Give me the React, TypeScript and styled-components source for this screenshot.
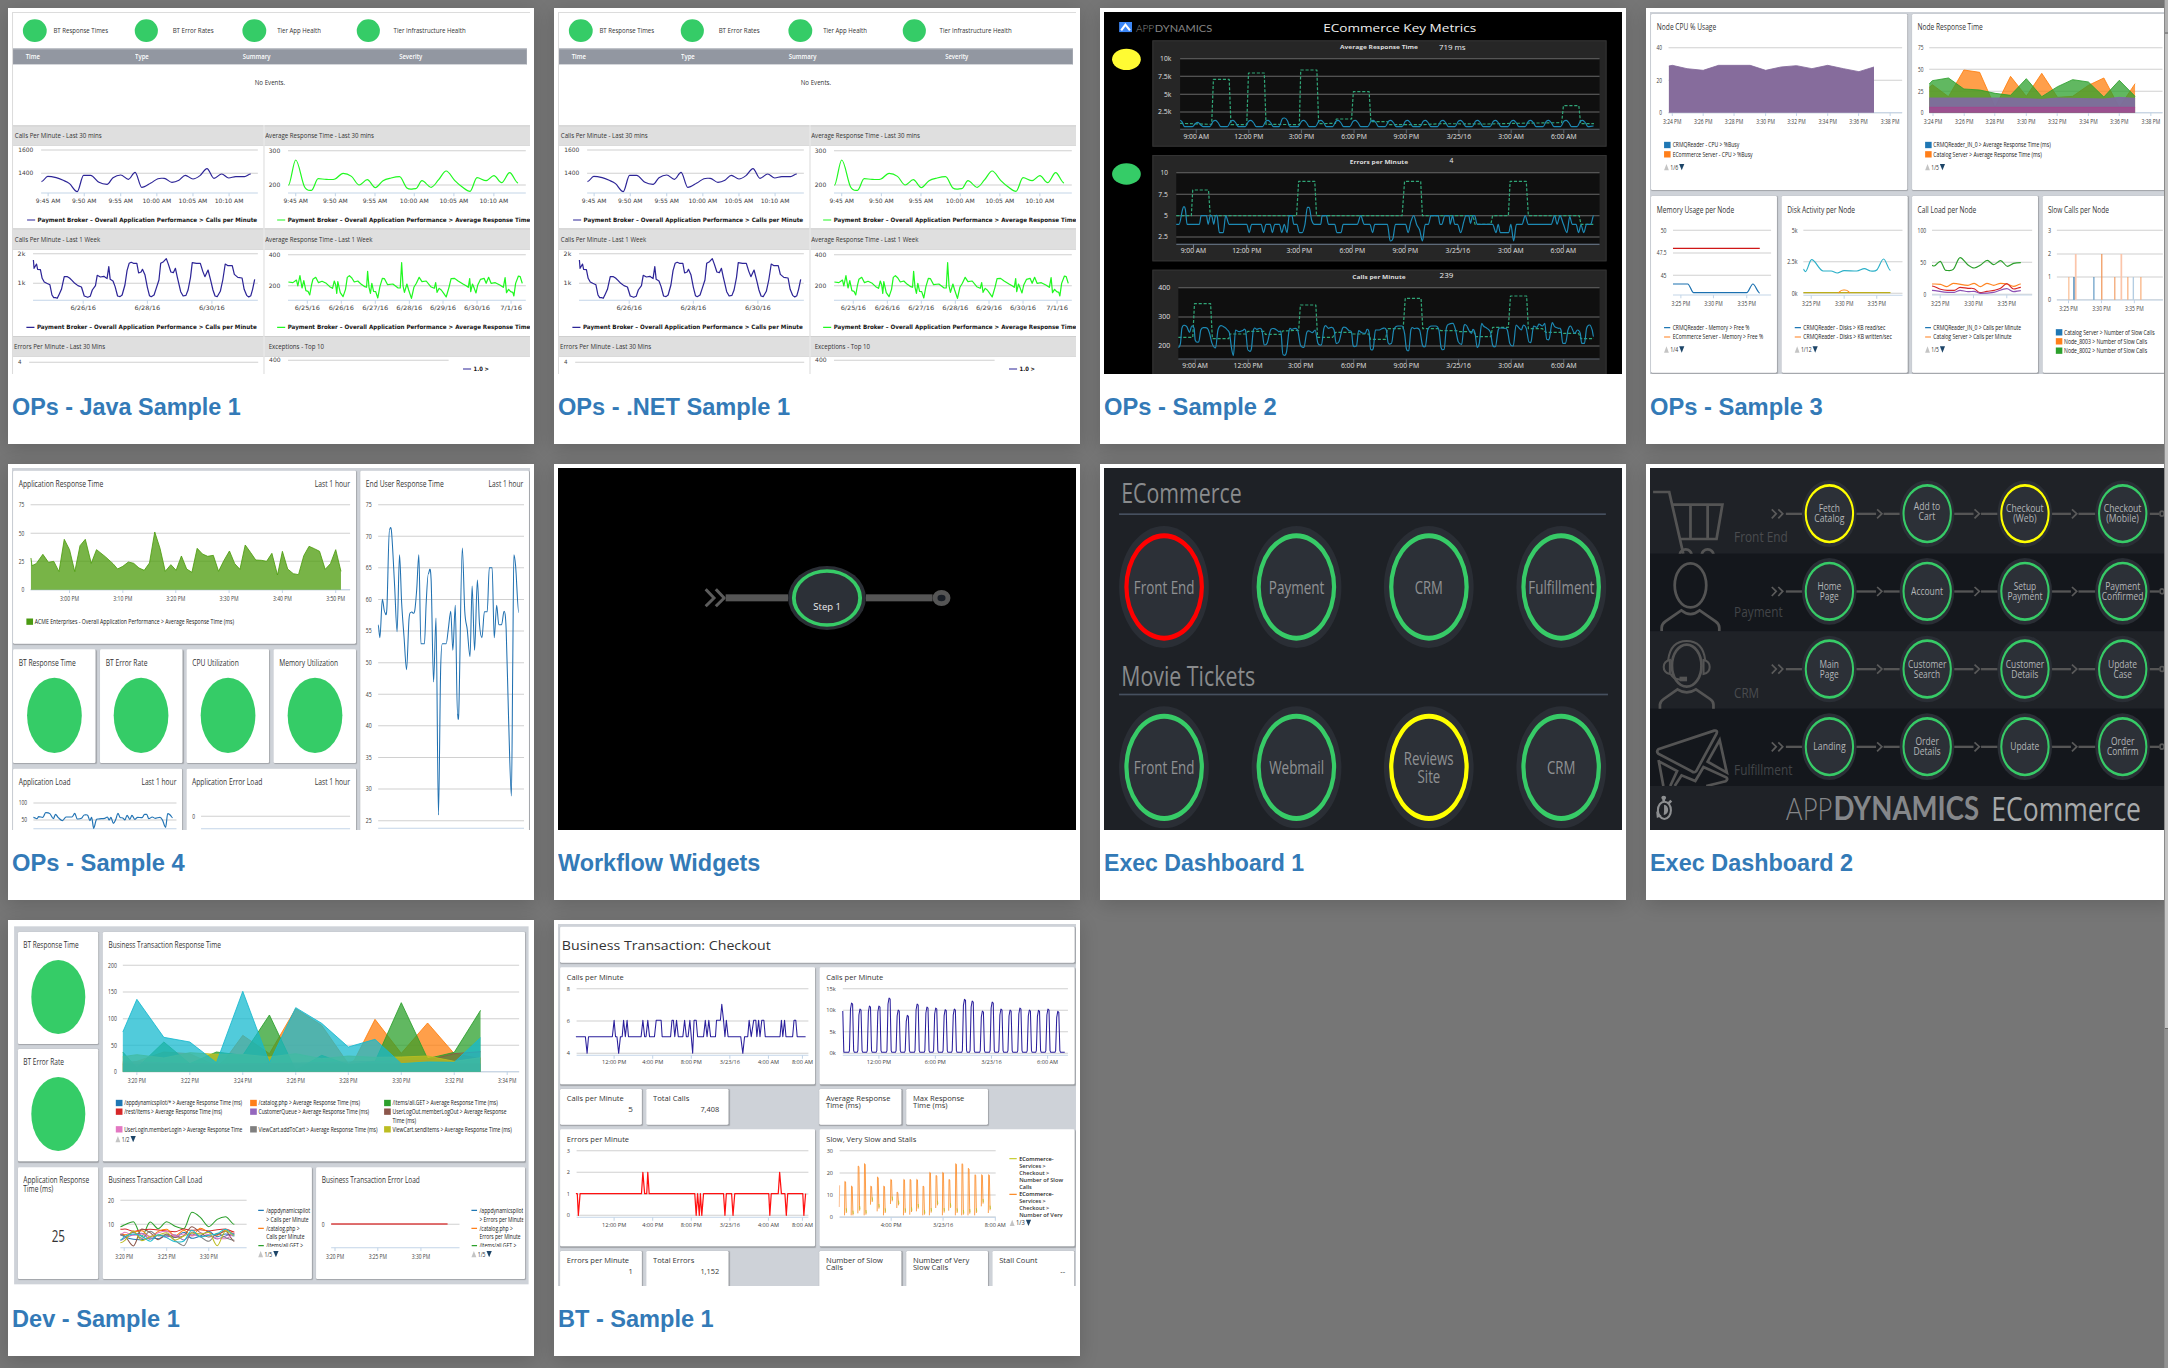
import React, { ReactNode, useLayoutEffect, useRef, useState } from "react";
import styled, { createGlobalStyle } from "styled-components";

const Global = createGlobalStyle`
  * { box-sizing: border-box; }
  body { margin: 0; background: #767676; font-family: "Liberation Sans", Arial, sans-serif; overflow: hidden; }
`;

/* ---------- page shell ---------- */
const Page = styled.div`
  display: flex;
  width: 2168px;
  height: 1368px;
  background: #767676;
  overflow: hidden;
`;
const Viewport = styled.main`
  width: 2164px;
  height: 1368px;
  overflow: hidden;
`;
const Gallery = styled.div`
  display: grid;
  grid-template-columns: repeat(4, 526px);
  grid-auto-rows: 436px;
  gap: 20px;
  padding: 8px;
  width: 2180px;
`;
const Card = styled.article`
  background: #fff;
  padding: 4px;
  box-shadow: 0 4px 18px rgba(0, 0, 0, 0.16);
`;
const Thumb = styled.div`
  width: 518px;
  height: 362px;
  overflow: hidden;
`;
const Caption = styled.h3`
  margin: 18px 0 0;
  height: 30px;
  font-size: 24px;
  line-height: 30px;
  font-weight: 700;
  color: #337ab7;
`;
const Rail = styled.aside`
  width: 4px;
  height: 1368px;
  border-left: 1px solid #8a8a8a;
  display: flex;
  flex-direction: column;
`;
const RailPart = styled.div<{ $h: number; $c: string }>`
  height: ${(p) => p.$h}px;
  background: ${(p) => p.$c};
`;

/* ---------- dashboard primitives ---------- */
const Board = styled.div<{ $w?: number; $bg?: string }>`
  width: ${(p) => p.$w ?? 1477}px;
  height: 1086px;
  overflow: hidden;
  background: ${(p) => p.$bg ?? "#ced2d8"};
  transform-origin: 0 0;
  transform: scale(${(p) => 518 / (p.$w ?? 1477)}, 0.33333);
  font-family: "Open Sans", "Noto Sans", sans-serif;
`;
const Grid = styled.div<{ $cols: string; $rows?: string; $gap?: string; $pad?: string }>`
  display: grid;
  grid-template-columns: ${(p) => p.$cols};
  grid-template-rows: ${(p) => p.$rows ?? "auto"};
  gap: ${(p) => p.$gap ?? "0"};
  padding: ${(p) => p.$pad ?? "0"};
`;
const Stack = styled.div<{ $gap?: number; $pad?: string }>`
  display: flex;
  flex-direction: column;
  gap: ${(p) => p.$gap ?? 0}px;
  padding: ${(p) => p.$pad ?? "0"};
`;
const Row = styled.div<{ $h: number; $pad?: string; $gap?: number; $bg?: string; $between?: boolean; $center?: boolean }>`
  display: flex;
  align-items: center;
  flex: none;
  height: ${(p) => p.$h}px;
  padding: ${(p) => p.$pad ?? "0"};
  gap: ${(p) => p.$gap ?? 0}px;
  background: ${(p) => p.$bg ?? "transparent"};
  justify-content: ${(p) => (p.$center ? "center" : p.$between ? "space-between" : "flex-start")};
`;
const Panel = styled.section<{ $h?: number }>`
  background: #fff;
  border-radius: 4px;
  overflow: hidden;
  height: ${(p) => (p.$h ? p.$h + "px" : "auto")};
  box-shadow: 2px 3px 3px rgba(0, 0, 0, 0.22);
`;
const Disc = styled.div<{ $w: number; $h: number; $c?: string }>`
  flex: none;
  width: ${(p) => p.$w}px;
  height: ${(p) => p.$h}px;
  border-radius: 50%;
  background: ${(p) => p.$c ?? "#35cc67"};
`;

const FitBox = styled.span<{ $w: number; $s: number; $c: string; $b: number; $l?: number; $f?: string }>`
  display: block;
  flex: none;
  width: ${(p) => p.$w}px;
  font-size: ${(p) => p.$s}px;
  line-height: ${(p) => p.$l ?? p.$s * 1.3}px;
  font-weight: ${(p) => p.$b};
  color: ${(p) => p.$c};
  ${(p) => (p.$f ? `font-family: ${p.$f};` : "")}
`;
const FitInner = styled.span`
  display: inline-block;
  white-space: nowrap;
  transform-origin: 0 50%;
`;
type FitProps = { w: number; s: number; c?: string; b?: number; l?: number; f?: string; children: ReactNode };
/* Text squeezed or stretched to an exact run length. */
function Fit({ w, s, c = "#333", b = 400, l, f, children }: FitProps) {
  const ref = useRef<HTMLSpanElement>(null);
  const [k, setK] = useState(1);
  useLayoutEffect(() => {
    if (ref.current) setK(w / ref.current.offsetWidth);
  }, [w, s]);
  return (
    <FitBox $w={w} $s={s} $c={c} $b={b} $l={l} $f={f}>
      <FitInner ref={ref} style={{ transform: `scaleX(${k})` }}>{children}</FitInner>
    </FitBox>
  );
}

/* ---------- chart primitives ---------- */
const Svg = styled.svg`
  display: block;
  flex: none;
`;
type View = [number, number, number, number];
const Chart = ({ v, children, font }: { v: View; children: ReactNode; font?: string }) => (
  <Svg width={v[2] - v[0]} height={v[3] - v[1]} viewBox={`${v[0]} ${v[1]} ${v[2] - v[0]} ${v[3] - v[1]}`} fontFamily={font ?? '"Open Sans", sans-serif'}>
    {children}
  </Svg>
);
type TProps = { x: number; y: number; w: number; s?: number; c?: string; a?: "start" | "middle" | "end"; b?: number; children: string };
/* y is the vertical centre of the capitals */
const T = ({ x, y, w, s = 20, c = "#333", a = "start", b = 400, children }: TProps) => (
  <text x={x} y={y + s * 0.36} fontSize={s} fill={c} textAnchor={a} fontWeight={b} textLength={w} lengthAdjust="spacingAndGlyphs">
    {children}
  </text>
);
const parse = (d: string) => d.trim().split(/\s+/).map((p) => p.split(",").map(Number));
const smooth = (d: string) => {
  const p = parse(d);
  let out = `M${p[0][0]},${p[0][1]}`;
  for (let i = 0; i < p.length - 1; i++) {
    const a = p[i - 1] ?? p[i], b = p[i], c = p[i + 1], e = p[i + 2] ?? c;
    const flatB = (b[1] - a[1]) * (c[1] - b[1]) <= 0;
    const flatC = (c[1] - b[1]) * (e[1] - c[1]) <= 0;
    const h = (c[0] - b[0]) / 3;
    const mb = flatB ? 0 : (c[1] - a[1]) / (c[0] - a[0]);
    const mc = flatC ? 0 : (e[1] - b[1]) / (e[0] - b[0]);
    out += `C${b[0] + h},${b[1] + mb * h} ${c[0] - h},${c[1] - mc * h} ${c[0]},${c[1]}`;
  }
  return out;
};
const Curve = ({ d, c, w = 3.4 }: { d: string; c: string; w?: number }) => <path d={smooth(d)} fill="none" stroke={c} strokeWidth={w} />;
const Line = ({ d, c, w = 3.5, dash }: { d: string; c: string; w?: number; dash?: string }) => (
  <polyline points={d} fill="none" stroke={c} strokeWidth={w} strokeDasharray={dash} strokeLinejoin="round" />
);
const Area = ({ d, c, base, o = 0.75 }: { d: string; c: string; base: number; o?: number }) => {
  const p = parse(d);
  return (
    <g>
      <polygon points={`${d} ${p[p.length - 1][0]},${base} ${p[0][0]},${base}`} fill={c} fillOpacity={o} />
      <polyline points={d} fill="none" stroke={c} strokeWidth={2.5} />
    </g>
  );
};
type Tick = [number, string, number];
type AxisProps = {
  x1: number; x2: number; ys: [number, string, number][]; lx: number; base?: number; xs?: Tick[]; ly?: number;
  s?: number; c?: string; grid?: string; baseC?: string; gw?: number; tick?: number;
};
const Axis = ({ x1, x2, ys, lx, base, xs = [], ly = 0, s = 20, c = "#404040", grid = "#d0d0d0", baseC = "#c3d5e8", gw = 3, tick = 10 }: AxisProps) => (
  <g>
    {ys.map(([y, t, w]) => (
      <g key={y}>
        <line x1={x1} x2={x2} y1={y} y2={y} stroke={grid} strokeWidth={gw} />
        <T x={lx} y={y} w={w} s={s} c={c} a="end">{t}</T>
      </g>
    ))}
    {base && <line x1={x1} x2={x2} y1={base} y2={base} stroke={baseC} strokeWidth={3} />}
    {xs.map(([x, t, w]) => (
      <g key={x}>
        {base && <line x1={x} x2={x} y1={base} y2={base + tick} stroke={baseC} strokeWidth={3} />}
        <T x={x} y={ly} w={w} s={s} c={c} a="middle">{t}</T>
      </g>
    ))}
  </g>
);
const Key = ({ x, y, c, w, children, line, gap = 24, s = 20, b = 400 }: { x: number; y: number; c: string; w: number; children: string; line?: boolean; gap?: number; s?: number; b?: number }) => (
  <g>
    {line ? <line x1={x} x2={x + gap - 7} y1={y} y2={y} stroke={c} strokeWidth={3.4} /> : <rect x={x} y={y - 9.5} width={19} height={19} fill={c} />}
    <T x={x + gap} y={y} w={w} s={s} b={b} c="#151515">{children}</T>
  </g>
);
const Pager = ({ x, y, w, children }: { x: number; y: number; w: number; children: string }) => (
  <g>
    <path d={`M${x},${y + 9}h14l-7,-19z`} fill="#c4c4c4" />
    <T x={x + 18} y={y} w={w} s={20}>{children}</T>
    <path d={`M${x + 21 + w},${y - 10}h15l-7.5,19z`} fill="#1d4568" />
  </g>
);

/* ---------- OPs - Java / .NET ---------- */
const Framed = styled.div`
  height: 1086px;
  border-left: 3px solid #dcdcdc;
  border-top: 3px solid #dcdcdc;
`;
const Health = styled.div<{ $gap: number }>`
  display: flex;
  align-items: center;
  gap: ${(p) => p.$gap}px;
`;
const EventHead = styled.div`
  display: grid;
  grid-template-columns: 312px 307px 446px auto;
  align-items: center;
  width: 1465px;
  height: 50px;
  padding-left: 36px;
  background: #9297a1;
  border-top: 3px solid #c3c6cc;
  border-bottom: 3px solid #d4d6da;
`;
const Cell = styled.div<{ $right?: boolean }>`
  border-left: ${(p) => (p.$right ? "3px solid #dcdcdc" : "none")};
`;
const CellHead = styled.div<{ $h: number; $pad: number }>`
  display: flex;
  align-items: center;
  height: ${(p) => p.$h}px;
  padding-left: ${(p) => p.$pad}px;
  background: #dfdfdf;
  border-top: 3px solid #cfcfcf;
  border-bottom: 2px solid #d2d2d2;
`;
const verdana = '"DejaVu Sans", sans-serif';
const navy = "#2d2597";
const lime = "#20f820";

const EventsBoard = () => (
  <Board $bg="#fff">
    <Framed>
      <Grid $cols="319px 307px 326px auto" $rows="106px" $pad="0 0 0 28px">
        <Health $gap={19}><Disc $w={68} $h={68} /><Fit w={156} s={21}>BT Response Times</Fit></Health>
        <Health $gap={42}><Disc $w={66} $h={68} /><Fit w={117} s={21}>BT Error Rates</Fit></Health>
        <Health $gap={31}><Disc $w={68} $h={68} /><Fit w={125} s={21}>Tier App Health</Fit></Health>
        <Health $gap={39}><Disc $w={66} $h={68} /><Fit w={206} s={21}>Tier Infrastructure Health</Fit></Health>
      </Grid>
      <EventHead>
        <Fit w={40} s={20} c="#fff" b={600}>Time</Fit>
        <Fit w={39} s={20} c="#fff" b={600}>Type</Fit>
        <Fit w={79} s={20} c="#fff" b={600}>Summary</Fit>
        <Fit w={66} s={20} c="#fff" b={600}>Severity</Fit>
      </EventHead>
      <Row $h={181} $pad="0 0 74px 689px"><Fit w={87} s={21}>No Events.</Fit></Row>
      <Grid $cols="714px 763px">
        <Cell>
          <CellHead $h={61} $pad={5}><Fit w={248} s={21}>Calls Per Minute - Last 30 mins</Fit></CellHead>
          <Chart v={[37, 437, 751, 685]} font={verdana}>
            <Axis x1={117} x2={735} lx={95} s={18} ys={[[450, "1600", 43], [520, "1400", 43]]} base={579} ly={603}
              xs={[[137, "9:45 AM", 70], [240, "9:50 AM", 70], [344, "9:55 AM", 70], [447, "10:00 AM", 82], [550, "10:05 AM", 82], [653, "10:10 AM", 82]]} />
            <Curve c={navy} d="118,545 136,529 160,533 180,541 198,551 220,575 238,526 258,526 282,547 305,553 322,533 344,525 366,538 385,517 404,562 430,549 450,536 468,535 490,547 510,541 528,526 550,537 570,527 590,506 610,535 632,522 652,534 672,530 697,530 715,522" />
            <Key x={77} y={660} c={navy} w={626} line gap={30} s={18} b={700}>Payment Broker – Overall Application Performance &gt; Calls per Minute</Key>
          </Chart>
        </Cell>
        <Cell $right>
          <CellHead $h={61} $pad={2}><Fit w={310} s={21}>Average Response Time - Last 30 mins</Fit></CellHead>
          <Chart v={[754, 437, 1511, 685]} font={verdana}>
            <Axis x1={821} x2={1499} lx={799} s={18} ys={[[452, "300", 33], [555, "200", 33]]} base={579} ly={603}
              xs={[[843, "9:45 AM", 70], [956, "9:50 AM", 70], [1069, "9:55 AM", 70], [1181, "10:00 AM", 82], [1294, "10:05 AM", 82], [1408, "10:10 AM", 82]]} />
            <Curve c={lime} d="822,556 843,480 868,560 888,571 907,536 930,538 955,537 978,520 1002,529 1024,555 1047,539 1070,563 1092,542 1115,534 1139,530 1160,564 1185,566 1203,542 1229,562 1250,540 1272,513 1296,541 1318,561 1340,574 1360,533 1386,542 1408,527 1430,548 1453,518 1477,549" />
            <Key x={790} y={660} c={lime} w={692} line gap={30} s={18} b={700}>Payment Broker – Overall Application Performance &gt; Average Response Time</Key>
          </Chart>
        </Cell>
        <Cell>
          <CellHead $h={64} $pad={5}><Fit w={243} s={21}>Calls Per Minute - Last 1 Week</Fit></CellHead>
          <Chart v={[37, 749, 751, 1008]} font={verdana}>
            <Axis x1={94} x2={735} lx={72} s={18} ys={[[761, "2k", 22], [850, "1k", 22]]} base={901} ly={925}
              xs={[[237, "6/26/16", 73], [420, "6/28/16", 73], [604, "6/30/16", 74]]} />
            <Line c={navy} d="95,780 97,805 104,792 107,808 115,809 120,835 126,846 133,850 142,854 148,885 153,893 158,893 163,895 168,884 175,868 183,830 192,830 198,834 205,841 213,850 222,857 232,861 240,888 250,892 257,889 263,870 272,857 277,826 286,831 296,829 305,836 310,800 314,838 322,843 328,860 335,888 342,890 348,885 356,855 362,812 368,790 374,787 380,790 390,790 395,819 402,816 406,808 413,824 420,862 426,887 431,890 439,885 445,866 453,840 458,790 466,785 474,776 480,793 487,816 494,818 500,805 505,830 515,875 522,888 530,886 536,870 543,832 548,788 560,790 571,790 578,814 584,830 593,810 600,839 607,870 613,888 619,890 628,874 635,840 642,792 650,797 662,797 668,823 678,832 690,834 696,868 703,886 709,891 715,887 720,868 726,838" />
            <Key x={75} y={982} c={navy} w={627} line gap={30} s={18} b={700}>Payment Broker – Overall Application Performance &gt; Calls per Minute</Key>
          </Chart>
        </Cell>
        <Cell $right>
          <CellHead $h={64} $pad={2}><Fit w={306} s={21}>Average Response Time - Last 1 Week</Fit></CellHead>
          <Chart v={[754, 749, 1511, 1008]} font={verdana}>
            <Axis x1={821} x2={1499} lx={799} s={18} ys={[[764, "400", 33], [857, "200", 33]]} base={901} ly={923}
              xs={[[876, "6/25/16", 72], [973, "6/26/16", 72], [1070, "6/27/16", 74], [1167, "6/28/16", 74], [1263, "6/29/16", 74], [1360, "6/30/16", 74], [1457, "7/1/16", 62]]} />
            <Line c={lime} d="822,846 835,848 845,840 849,858 855,827 861,864 866,842 872,872 878,874 883,885 888,855 892,838 900,832 908,848 918,844 930,850 940,860 948,865 953,843 957,855 960,880 963,845 970,878 978,890 985,868 990,832 996,827 1003,834 1010,846 1020,843 1030,853 1040,860 1045,862 1048,814 1052,862 1056,880 1060,850 1065,874 1071,875 1077,894 1083,860 1090,835 1096,836 1105,854 1120,852 1135,864 1141,864 1145,788 1149,858 1153,877 1160,852 1165,870 1173,895 1180,862 1187,850 1195,832 1203,845 1215,843 1228,860 1238,865 1242,848 1246,877 1252,865 1258,870 1265,880 1272,891 1280,862 1286,836 1296,835 1306,843 1320,852 1330,858 1335,862 1339,836 1342,875 1347,852 1352,865 1357,879 1362,855 1370,838 1380,835 1386,850 1393,832 1400,850 1412,848 1425,855 1435,862 1440,833 1444,878 1450,868 1456,875 1462,877 1465,888 1470,850 1478,828 1483,830 1489,850" />
            <Key x={790} y={982} c={lime} w={692} line gap={30} s={18} b={700}>Payment Broker – Overall Application Performance &gt; Average Response Time</Key>
          </Chart>
        </Cell>
        <Cell>
          <CellHead $h={62} $pad={3}><Fit w={260} s={21}>Errors Per Minute - Last 30 Mins</Fit></CellHead>
          <Chart v={[37, 1070, 751, 1122]} font={verdana}>
            <Axis x1={83} x2={736} lx={61} s={18} ys={[[1087, "4", 10]]} />
          </Chart>
        </Cell>
        <Cell $right>
          <CellHead $h={62} $pad={12}><Fit w={158} s={21}>Exceptions - Top 10</Fit></CellHead>
          <Chart v={[754, 1070, 1511, 1122]} font={verdana}>
            <Axis x1={821} x2={1279} lx={800} s={18} ys={[[1081, "400", 33]]} />
            <Key x={1320} y={1107} c={navy} w={44} line gap={30} s={18} b={700}>1.0 &gt;</Key>
          </Chart>
        </Cell>
      </Grid>
    </Framed>
  </Board>
);

/* ---------- OPs - Sample 2 ---------- */
const DarkPanel = styled.section<{ $h: number }>`
  width: 1295px;
  height: ${(p) => p.$h}px;
  background: #262626;
  border: 3px solid #333;
`;
const Lamp = styled.div`
  width: 138px;
  padding: 25px 0 0 23px;
`;
const Split = styled.div<{ $mb?: number }>`
  display: flex;
  margin-bottom: ${(p) => p.$mb ?? 0}px;
`;
const dashGreen = "#30a577";
const steel = "#1d8ab5";
const hours = (cs: number[]): Tick[] =>
  ["9:00 AM", "12:00 PM", "3:00 PM", "6:00 PM", "9:00 PM", "3/25/16", "3:00 AM", "6:00 AM"].map((t, i) => [cs[i], t, [73, 83, 73, 73, 73, 70, 73, 73][i]]);
const ripple = [308, 358, 408, 459, 508, 555, 610, 659, 708, 757, 808, 858, 906, 957, 1007, 1057, 1106, 1157, 1208, 1257, 1308, 1358, 1405]
  .map((p) => { const t = p === 555 ? 354 : p === 308 ? 367 : 361; return `${p - 16},380 ${p - 7},${t + 3} ${p},${t} ${p + 8},${t + 8} ${p + 15},380`; }).join(" ");
const darkAxis = { c: "#e0e0e0", grid: "#686868", baseC: "#5a636e", s: 19, gw: 3.2, tick: 12 };

const MetricsBoard = () => (
  <Board $bg="#000">
    <Row $h={85} $pad="5px 0 0 43px">
      <Chart v={[83, 66, 120, 97]}>
        <rect x={83} y={66} width={37} height={31} fill="#3c87f7" />
        <path d="M89,91 L101,74 L114,91" fill="none" stroke="#fff" strokeWidth={6} />
      </Chart>
      <Row $h={80} $pad="8px 0 0 11px" $gap={2}>
        <Fit w={52} s={27} c="#8a8a8a" b={300} f="Lato, sans-serif">APP</Fit>
        <Fit w={164} s={27} c="#858585" b={400} f="Lato, sans-serif">DYNAMICS</Fit>
      </Row>
      <Row $h={80} $pad="4px 0 0 316px"><Fit w={436} s={33} c="#f0f0f0">ECommerce Key Metrics</Fit></Row>
    </Row>
    <Split $mb={25}>
      <Lamp><Disc $w={82} $h={64} $c="#fffb33" /></Lamp>
      <DarkPanel $h={319}>
        <Chart v={[181, 124, 1470, 437]}>
          <rect x={257} y={176} width={1196} height={212} fill="#0f0f0f" />
          <T x={713} y={142} w={222} s={18} c="#ddd" b={700}>Average Response Time</T>
          <T x={995} y={142} w={76} s={20} c="#eee">719 ms</T>
          <Axis {...darkAxis} x1={257} x2={1453} lx={232} ys={[[176, "10k", 32], [229, "7.5k", 38], [283, "5k", 21], [336, "2.5k", 38]]} base={388} ly={410} xs={hours([303, 453, 603, 753, 902, 1052, 1201, 1351])} />
          <Line c={dashGreen} dash="9 5" d="257,370 347,373 352,238 397,238 402,374 447,374 452,219 497,219 502,373 597,374 601,210 647,210 652,371 700,370 702,357 746,357 751,275 796,275 801,365 848,365 852,374 950,374 1002,371 1130,372 1210,370 1345,368 1350,317 1394,317 1399,371 1437,371" />
          <Curve c={steel} w={3.4} d={`257,361 262,365 270,380 ${ripple} 1436,378`} />
        </Chart>
      </DarkPanel>
    </Split>
    <Split $mb={25}>
      <Lamp><Disc $w={82} $h={64} /></Lamp>
      <DarkPanel $h={319}>
        <Chart v={[181, 468, 1470, 781]}>
          <rect x={246} y={518} width={1207} height={215} fill="#0f0f0f" />
          <T x={741} y={486} w={166} s={18} c="#ddd" b={700}>Errors per Minute</T>
          <T x={1025} y={483} w={11} s={20} c="#eee">4</T>
          <Axis {...darkAxis} baseC="#748499" x1={246} x2={1453} lx={222} ys={[[518, "10", 21], [583, "7.5", 27], [647, "5", 11], [711, "2.5", 27]]} base={733} ly={753} xs={hours([295, 447, 597, 748, 899, 1049, 1200, 1350])} />
          <Line c={dashGreen} dash="9 5" d="246,647 289,647 293,570 338,570 343,647 589,647 595,544 641,544 646,647 890,647 897,544 943,544 948,647 1092,647 1098,673 1143,673 1148,647 1193,647 1198,544 1244,544 1250,647 1395,647 1400,673 1437,673" />
          <Curve c={steel} w={3.4} d="246,673 254,673 264,628 268,620 272,628 277,673 312,673 317,647 332,647 337,673 343,647 347,647 353,673 358,647 363,650 369,698 380,698 387,647 397,673 447,673 454,698 461,673 488,673 495,698 502,673 514,673 520,698 527,673 540,673 547,698 554,673 562,698 568,647 576,647 581,673 590,673 597,698 605,698 613,673 620,622 625,622 632,660 640,673 652,673 658,673 662,647 674,647 680,673 698,673 704,698 716,698 722,673 752,673 762,673 772,647 782,673 798,673 806,698 812,673 848,673 856,723 864,715 871,673 900,673 907,698 915,665 923,647 932,675 940,690 948,723 956,673 965,673 972,647 993,647 998,673 1003,673 1012,647 1024,647 1027,673 1034,647 1040,673 1048,673 1057,698 1066,665 1072,647 1080,647 1085,670 1090,650 1097,647 1104,673 1148,673 1158,698 1164,673 1170,698 1194,698 1200,673 1208,723 1216,673 1232,673 1241,647 1250,673 1315,673 1325,647 1332,673 1340,647 1350,673 1360,698 1368,650 1375,673 1386,673 1393,698 1400,675 1408,698 1416,673 1428,673 1436,647" />
        </Chart>
      </DarkPanel>
    </Split>
    <Split>
      <Lamp />
      <DarkPanel $h={340}>
        <Chart v={[181, 812, 1470, 1122]}>
          <rect x={252} y={863} width={1201} height={213} fill="#0f0f0f" />
          <T x={748} y={830} w={152} s={18} c="#ddd" b={700}>Calls per Minute</T>
          <T x={997} y={827} w={39} s={20} c="#eee">239</T>
          <Axis {...darkAxis} x1={252} x2={1453} lx={229} ys={[[863, "400", 34], [951, "300", 34], [1038, "200", 34]]} base={1077} ly={1097} xs={hours([300, 451, 601, 752, 902, 1051, 1201, 1351])} />
          <Line c={dashGreen} dash="9 5" d="252,1012 293,1012 298,911 344,911 349,1016 396,1016 399,1002 445,1002 450,994 497,994 500,1003 545,1003 549,993 595,991 600,915 644,915 649,1012 692,1012 700,997 745,997 750,1002 795,1002 800,1018 843,1018 848,986 893,986 899,895 944,895 949,986 995,986 1000,992 1045,992 1052,995 1095,995 1100,1010 1143,1010 1148,982 1193,982 1199,888 1245,888 1250,986 1290,986 1300,997 1345,997 1350,1000 1393,1000 1400,1016 1437,1016" />
          <Curve c={steel} w={3.4} d="252,1042 258,1030 262,985 270,976 276,980 284,997 290,978 297,985 300,1020 310,1026 316,990 325,983 335,985 341,1000 348,1030 358,1044 365,990 374,977 384,982 392,990 398,1000 403,1040 409,1067 415,990 425,995 435,992 444,993 450,1050 460,1048 466,990 476,988 490,990 497,1035 505,1030 515,990 525,986 538,995 545,1000 550,1064 560,1058 568,990 575,988 592,990 600,1035 610,1042 618,998 625,993 634,998 642,990 650,1030 660,1035 667,985 672,977 680,985 688,982 696,990 702,1030 710,1025 720,985 728,982 738,992 746,998 750,1035 760,1038 766,992 775,998 785,1000 790,988 796,998 800,1048 808,1044 814,990 825,990 835,985 845,990 850,1028 860,1030 866,990 878,978 890,978 897,1000 902,1045 909,1052 915,990 925,986 940,990 948,1035 956,1040 963,990 975,978 985,978 995,990 1001,1042 1010,1048 1016,985 1025,972 1035,970 1042,988 1050,1025 1060,1033 1066,980 1072,975 1080,990 1088,1000 1092,988 1098,1000 1104,1042 1110,1030 1117,970 1122,978 1132,985 1142,997 1148,1035 1156,1040 1164,990 1170,984 1180,985 1190,990 1197,1030 1207,1038 1215,975 1222,982 1230,990 1236,975 1244,985 1252,1026 1258,1024 1265,978 1275,982 1280,972 1290,978 1297,970 1302,1018 1310,1015 1318,968 1325,980 1335,985 1343,990 1348,1030 1356,1030 1363,990 1370,978 1382,1000 1390,990 1398,1000 1402,1030 1410,1030 1416,985 1425,975 1432,990 1436,1010" />
        </Chart>
      </DarkPanel>
    </Split>
  </Board>
);

/* ---------- OPs - Sample 3 ---------- */
const B = "#1f77b4", O = "#ff7f1a", G = "#2ca02c";
const pm = (a: [number, number][], w: number): Tick[] => a.map(([x, m]) => [x, `3:${m} PM`, w]);

const NodesBoard = () => (
  <Board $w={1510}>
    <Grid $cols="747px 746px" $rows="528px" $gap="14px" $pad="6px 0 0 3px">
      <Panel>
        <Row $h={74} $pad="0 0 0 17px"><Fit w={173} s={28}>Node CPU % Usage</Fit></Row>
        <Chart v={[61, 116, 808, 570]}>
          <Axis x1={112} x2={793} lx={93} ys={[[143, "40", 16], [241, "20", 16], [338, "0", 8]]} base={338} ly={364} xs={pm([[123, 24], [213, 26], [303, 28], [395, 30], [485, 32], [576, 34], [666, 36], [758, 38]], 54)} />
          <Area c="#84699a" o={0.98} base={338} d="113,198 123,196 166,206 213,211 258,196 350,196 395,211 440,201 485,197 530,206 576,196 622,206 667,215 711,201" />
          <Key x={99} y={435} c={B} w={194} gap={25}>CRMQReader - CPU &gt; %Busy</Key>
          <Key x={99} y={463} c={O} w={233} gap={25}>ECommerce Server - CPU &gt; %Busy</Key>
          <Pager x={99} y={502} w={23}>1/6</Pager>
        </Chart>
      </Panel>
      <Panel>
        <Row $h={74} $pad="0 0 0 16px"><Fit w={190} s={28}>Node Response Time</Fit></Row>
        <Chart v={[822, 116, 1568, 570]}>
          <Axis x1={872} x2={1552} lx={855} ys={[[143, "75", 16], [208, "50", 16], [274, "25", 16], [338, "0", 8]]} base={338} ly={364} xs={pm([[883, 24], [974, 26], [1063, 28], [1155, 30], [1245, 32], [1336, 34], [1426, 36], [1518, 38]], 54)} />
          <Area c="#ff7f0e" base={338} d="872,262 881,254 928,290 973,210 1019,217 1064,322 1109,229 1155,289 1200,220 1246,292 1290,289 1336,256 1381,234 1426,322 1472,251" />
          <Area c={G} base={338} d="872,252 881,242 928,234 973,267 1019,270 1064,280 1109,286 1155,236 1200,290 1246,260 1290,239 1336,246 1381,291 1426,241 1472,289" />
          <Area c="#806aa2" o={0.92} base={338} d="872,294 1110,294 1200,298 1246,294 1381,297 1426,292 1472,295" />
          <Area c="#a5458c" o={0.75} base={338} d="872,322 1472,322" />
          <Key x={860} y={435} c={B} w={342}>CRMQReader_IN_0 &gt; Average Response Time (ms)</Key>
          <Key x={860} y={463} c={O} w={316}>Catalog Server &gt; Average Response Time (ms)</Key>
          <Pager x={860} y={502} w={22}>1/5</Pager>
        </Chart>
      </Panel>
    </Grid>
    <Grid $cols="367px 367px 367px 366px" $rows="530px" $gap="13.5px" $pad="18px 0 0 3px">
      <Panel>
        <Row $h={78} $pad="0 0 0 17px"><Fit w={225} s={28}>Memory Usage per Node</Fit></Row>
        <Chart v={[61, 666, 428, 1118]}>
          <Axis x1={125} x2={411} lx={106} ys={[[691, "50", 17], [759, "47.5", 28], [826, "45", 17]]} base={885} ly={912} xs={pm([[148, 25], [243, 30], [340, 35]], 54)} />
          <Line c="#cf1717" w={4} d="125,745 378,745" />
          <Curve c="#1a70b0" w={3.6} d="125,852 168,852 185,878 340,878 358,852 378,879" />
          <Key x={99} y={983} c={B} line w={224} gap={25}>CRMQReader - Memory &gt; Free %</Key>
          <Key x={99} y={1011} c={O} line w={264} gap={25}>ECommerce Server - Memory &gt; Free %</Key>
          <Pager x={99} y={1049} w={23}>1/4</Pager>
        </Chart>
      </Panel>
      <Panel>
        <Row $h={78} $pad="0 0 0 16px"><Fit w={198} s={28}>Disk Activity per Node</Fit></Row>
        <Chart v={[441, 666, 808, 1118]}>
          <Axis x1={504} x2={793} lx={487} ys={[[691, "5k", 17], [785, "2.5k", 30], [880, "0k", 17]]} base={886} ly={912} xs={pm([[527, 25], [623, 30], [718, 35]], 54)} />
          <Curve c="#2bb0c8" d="504,808 510,815 528,779 562,813 585,813 603,819 623,812 660,813 682,806 700,813 718,810 738,777 758,811" />
          <Line c="#bcae1c" w={4} d="504,878 758,878" />
          <Curve c="#ff8c1a" w={3} d="606,878 615,871 623,870 631,871 640,878" />
          <Key x={479} y={983} c={B} line w={239} gap={25}>CRMQReader - Disks &gt; KB read/sec</Key>
          <Key x={479} y={1011} c={O} line w={258} gap={25}>CRMQReader - Disks &gt; KB written/sec</Key>
          <Pager x={479} y={1049} w={31}>1/12</Pager>
        </Chart>
      </Panel>
      <Panel>
        <Row $h={78} $pad="0 0 0 16px"><Fit w={171} s={28}>Call Load per Node</Fit></Row>
        <Chart v={[822, 666, 1189, 1118]}>
          <Axis x1={880} x2={1172} lx={863} ys={[[691, "100", 25], [787, "50", 17], [883, "0", 8]]} base={885} ly={912} xs={pm([[904, 25], [1001, 30], [1098, 35]], 54)} />
          <Curve c="#2ca02c" d="880,796 886,798 904,784 920,811 942,808 962,773 985,795 1003,804 1022,795 1041,781 1060,794 1080,782 1100,799 1118,790 1139,788" />
          <Curve c="#ff8522" d="880,852 905,853 923,860 942,850 985,856 1003,850 1021,860 1040,850 1060,856 1080,850 1098,852 1118,859 1139,852" />
          <Curve c="#d62728" d="880,858 905,868 925,871 945,871 962,862 985,865 1003,866 1020,878 1040,874 1062,871 1080,865 1098,851 1118,867 1139,862" />
          <Curve c="#8c52b5" d="880,871 925,877 945,877 962,871 985,875 1003,874 1020,880 1060,877 1098,866 1118,875 1139,872" />
          <Key x={860} y={983} c={B} line w={256}>CRMQReader_IN_0 &gt; Calls per Minute</Key>
          <Key x={860} y={1011} c={O} line w={228}>Catalog Server &gt; Calls per Minute</Key>
          <Pager x={860} y={1049} w={22}>1/5</Pager>
        </Chart>
      </Panel>
      <Panel>
        <Row $h={78} $pad="0 0 0 15px"><Fit w={178} s={28}>Slow Calls per Node</Fit></Row>
        <Chart v={[1202, 666, 1568, 1118]}>
          <Axis x1={1243} x2={1552} lx={1226} ys={[[691, "3", 9], [762, "2", 9], [831, "1", 9], [899, "0", 9]]} base={900} ly={926} xs={pm([[1277, 25], [1373, 30], [1469, 35]], 54)} />
          {([[1278, 831, "#f7a063", 2.5], [1293, 831, "#3b80b5", 4], [1298, 762, "#fbc5aa", 5], [1351, 831, "#4a8abb", 3], [1374, 762, "#ef9050", 3.4], [1412, 831, "#ef9050", 3], [1431, 762, "#fbc5aa", 5], [1450, 831, "#f7a063", 3], [1466, 831, "#b4cde2", 4], [1488, 831, "#f7a063", 3]] as [number, number, string, number][]).map(([x, y, c, w]) => (
            <line key={x} x1={x} x2={x} y1={y} y2={899} stroke={c} strokeWidth={w} />
          ))}
          <Key x={1240} y={997} c={B} w={264}>Catalog Server &gt; Number of Slow Calls</Key>
          <Key x={1240} y={1024} c={O} w={242}>Node_8003 &gt; Number of Slow Calls</Key>
          <Key x={1240} y={1052} c={G} w={242}>Node_8002 &gt; Number of Slow Calls</Key>
        </Chart>
      </Panel>
    </Grid>
  </Board>
);

/* ---------- OPs - Sample 4 ---------- */
const AcmeBoard = () => (
  <Board>
    <Grid $cols="978px 481px" $gap="12px" $pad="8px 0 0 3px">
      <Stack $gap={17}>
        <Panel $h={519}>
          <Row $h={76} $pad="0 17px 0 16px" $between><Fit w={241} s={28}>Application Response Time</Fit><Fit w={101} s={28}>Last 1 hour</Fit></Row>
          <Chart v={[37, 120, 1015, 563]}>
            <Axis x1={87} x2={998} lx={69} ys={[[146, "75", 16], [232, "50", 16], [316, "25", 16], [401, "0", 8]]} base={401} ly={427}
              xs={[[198, "3:00 PM", 54], [350, "3:10 PM", 54], [501, "3:20 PM", 54], [653, "3:30 PM", 54], [805, "3:40 PM", 54], [957, "3:50 PM", 54]]} />
            <Area c="#4f9d10" o={0.77} base={401} d="88,306 91,329 103,323 122,295 138,319 153,316 168,347 183,250 198,281 213,347 228,269 243,250 260,322 275,281 300,302 322,323 335,339 350,331 366,318 381,322 396,336 411,343 426,321 441,228 456,277 471,346 487,326 502,343 517,300 532,339 547,349 562,277 577,294 592,301 608,298 623,346 638,314 654,285 669,323 684,340 699,267 714,289 729,312 745,313 760,316 775,292 791,357 805,286 820,339 836,353 851,356 866,299 881,271 896,278 911,286 927,340 942,323 957,281 972,346" />
            <Key x={75} y={497} c="#4a9a12" w={568}>ACME Enterprises - Overall Application Performance &gt; Average Response Time (ms)</Key>
          </Chart>
        </Panel>
        <Grid $cols="repeat(4, 235px)" $rows="341px" $gap="12.7px">
          {([["BT Response Time", 163], ["BT Error Rate", 119], ["CPU Utilization", 133], ["Memory Utilization", 168]] as [string, number][]).map(([t, w]) => (
            <Panel key={t}>
              <Row $h={78} $pad="0 0 0 16px"><Fit w={w} s={28}>{t}</Fit></Row>
              <Row $h={240} $center><Disc $w={156} $h={226} /></Row>
            </Panel>
          ))}
        </Grid>
        <Grid $cols="482px 483px" $rows="200px" $gap="13px">
          <Panel>
            <Row $h={78} $pad="0 16px" $between><Fit w={148} s={28}>Application Load</Fit><Fit w={100} s={28}>Last 1 hour</Fit></Row>
            <Chart v={[37, 1016, 519, 1138]}>
              <Axis x1={95} x2={503} lx={77} ys={[[1041, "100", 24], [1092, "50", 16]]} base={1118} />
              <Curve c="#2374b4" d="95,1084 105,1088 110,1082 122,1084 130,1070 142,1073 152,1088 158,1075 166,1085 178,1094 188,1083 205,1083 213,1072 220,1089 232,1087 240,1077 250,1078 256,1094 261,1084 267,1117 274,1092 280,1089 298,1087 306,1083 311,1092 316,1084 323,1102 330,1090 336,1072 342,1084 350,1086 356,1092 362,1078 370,1090 376,1078 384,1090 392,1084 405,1085 412,1075 418,1075 424,1088 434,1083 442,1087 456,1084 463,1092 472,1114 478,1073 485,1077 492,1085" />
            </Chart>
          </Panel>
          <Panel>
            <Row $h={78} $pad="0 17px 0 15px" $between><Fit w={201} s={28}>Application Error Load</Fit><Fit w={101} s={28}>Last 1 hour</Fit></Row>
            <Chart v={[532, 1016, 1015, 1138]}>
              <Axis x1={573} x2={998} lx={556} ys={[[1081, "0", 8]]} base={1118} />
            </Chart>
          </Panel>
        </Grid>
      </Stack>
      <Panel>
        <Row $h={76} $pad="0 16px" $between><Fit w={222} s={28}>End User Response Time</Fit><Fit w={99} s={28}>Last 1 hour</Fit></Row>
        <Chart v={[1027, 120, 1508, 1135]}>
          <Axis x1={1078} x2={1494} lx={1060} base={1117} ys={[75, 70, 65, 60, 55, 50, 45, 40, 35, 30, 25].map((n, i) => [146 + i * 94.8, String(n), 17] as [number, string, number])} />
          <Curve c="#2171b1" w={3} d="1078,506 1083,545 1090,430 1097,469 1103,455 1110,222 1116,225 1125,390 1132,527 1139,296 1145,440 1152,545 1159,641 1166,490 1172,469 1182,466 1188,400 1194,296 1200,563 1210,563 1215,440 1221,354 1229,370 1236,678 1243,486 1250,1077 1256,650 1261,563 1272,563 1278,520 1285,466 1291,583 1298,448 1304,772 1308,768 1318,276 1325,466 1332,520 1340,602 1346,390 1353,583 1361,372 1367,505 1374,545 1381,467 1389,467 1395,335 1403,335 1409,545 1416,448 1422,506 1430,506 1437,466 1443,520 1450,790 1458,1020 1462,600 1465,296 1470,330 1479,470" />
        </Chart>
      </Panel>
    </Grid>
  </Board>
);

/* ---------- Workflow Widgets ---------- */
const Halo = styled.div<{ $w: number; $h: number }>`
  display: flex;
  flex: none;
  align-items: center;
  justify-content: center;
  width: ${(p) => p.$w}px;
  height: ${(p) => p.$h}px;
  border-radius: 50%;
  background: #2a2e35;
`;
const Ring = styled.div<{ $w: number; $h: number; $bx: number; $by: number; $c: string; $pt?: number; $pb?: number }>`
  display: flex;
  flex-direction: column;
  align-items: center;
  justify-content: center;
  width: ${(p) => p.$w}px;
  height: ${(p) => p.$h}px;
  padding-top: ${(p) => p.$pt ?? 0}px;
  padding-bottom: ${(p) => p.$pb ?? 0}px;
  border-radius: 50%;
  border-style: solid;
  border-color: ${(p) => p.$c};
  border-width: ${(p) => `${p.$by}px ${p.$bx}px`};
  background: #2c3037;
`;
const Bar = styled.div<{ $w: number; $h: number }>`
  flex: none;
  width: ${(p) => p.$w}px;
  height: ${(p) => p.$h}px;
  background: #555;
`;
const EndDot = styled.div<{ $w: number; $h: number; $b: number; $bg?: string }>`
  flex: none;
  width: ${(p) => p.$w}px;
  height: ${(p) => p.$h}px;
  border: ${(p) => p.$b}px solid #555;
  border-radius: 50%;
  background: ${(p) => p.$bg ?? "transparent"};
`;
const green = "#37cb67";
const WorkflowBoard = () => (
  <Board $bg="#000">
    <Row $h={772} $pad="7px 0 0 417px">
      <Chart v={[454, 396, 515, 456]}>
        <path d="M458,400 L482,426 L458,451 M487,400 L511,426 L487,451" fill="none" stroke="#5c5c5c" strokeWidth={8.5} />
      </Chart>
      <Bar $w={178} $h={21} />
      <Halo $w={222} $h={192}>
        <Ring $w={200} $h={172} $bx={11} $by={10} $c={green} $pt={54}><Fit w={79} s={26} c="#eee">Step 1</Fit></Ring>
      </Halo>
      <Bar $w={190} $h={21} />
      <EndDot $w={51} $h={48} $b={14} $bg="#191e26" />
    </Row>
  </Board>
);

/* ---------- Exec Dashboard 1 ---------- */
const Rule = styled.hr<{ $w: number }>`
  width: ${(p) => p.$w}px;
  height: 5px;
  margin: 0 0 0 43px;
  border: 0;
  background: #46505f;
`;
type Lbl = [string, number];
const ExecRow = ({ nodes }: { nodes: [string, Lbl[]][] }) => (
  <Grid $cols="repeat(4, 256px)" $gap="121.6px" $pad="33px 0 0 43px">
    {nodes.map(([c, ls], i) => (
      <Halo key={i} $w={256} $h={366}>
        <Ring $w={227} $h={322} $bx={12} $by={15} $c={c}>
          {ls.map(([t, w]) => <Fit key={t} w={w} s={54} l={54} c="#8f9193">{t}</Fit>)}
        </Ring>
      </Halo>
    ))}
  </Grid>
);
const Exec1Board = () => (
  <Board $bg="#1e2126">
    <Row $h={136} $pad="9px 0 0 49px"><Fit w={344} s={84} c="#898b8d">ECommerce</Fit></Row>
    <Rule $w={1388} />
    <ExecRow nodes={[["#ff0000", [["Front End", 173]]], [green, [["Payment", 158]]], [green, [["CRM", 80]]], [green, [["Fulfillment", 188]]]]} />
    <Row $h={137} $pad="25px 0 0 49px"><Fit w={382} s={84} c="#898b8d">Movie Tickets</Fit></Row>
    <Rule $w={1394} />
    <ExecRow nodes={[[green, [["Front End", 173]]], [green, [["Webmail", 156]]], ["#ffff00", [["Reviews", 142], ["Site", 65]]], [green, [["CRM", 81]]]]} />
  </Board>
);

/* ---------- Exec Dashboard 2 ---------- */
const Lane = styled.div<{ $h: number; $alt?: boolean; $top?: number }>`
  display: flex;
  flex: none;
  align-items: flex-start;
  height: ${(p) => p.$h}px;
  padding-top: ${(p) => p.$top ?? 0}px;
  background: ${(p) => (p.$alt ? "#14171c" : "#1f2227")};
`;
const LaneName = styled.div<{ $pt: number }>`
  width: 103px;
  padding-top: ${(p) => p.$pt}px;
  margin: 0 0 0 5px;
`;
const Flow = styled.div`
  display: flex;
  align-items: center;
  height: 198px;
  margin-left: 4px;
`;
const Chev = ({ two }: { two?: boolean }) => (
  <Chart v={two ? [408, 0, 448, 40] : [716, 0, 738, 40]}>
    <path d={two ? "M411,7 L424,20 L411,34 M430,7 L443,20 L430,34" : "M719,7 L733,20 L719,34"} fill="none" stroke="#5a5a5a" strokeWidth={5} />
  </Chart>
);
const Gap = styled.i<{ $w: number }>`
  flex: none;
  width: ${(p) => p.$w}px;
`;
const Link = ({ a, b }: { a: number; b: number }) => (
  <>
    <Bar $w={a} $h={7} />
    <Chev />
    <Bar $w={b} $h={7} />
  </>
);
const Step = ({ ls, c = green, lift = 0 }: { ls: Lbl[]; c?: string; lift?: number }) => (
  <Halo $w={159} $h={200}>
    <Ring $w={144} $h={178} $bx={6.5} $by={8} $c={c} $pb={lift}>
      {ls.map(([t, w]) => <Fit key={t} w={w} s={30} l={30} c="#b4b6b8">{t}</Fit>)}
    </Ring>
  </Halo>
);
const LaneFlow = ({ steps, cs = [], lift = 0 }: { steps: Lbl[][]; cs?: string[]; lift?: number }) => (
  <Flow>
    <Chev two />
    <Gap $w={4} />
    <Bar $w={47} $h={7} />
    <Step ls={steps[0]} c={cs[0]} />
    <Link a={57} b={47} />
    <Step ls={steps[1]} c={cs[1]} lift={lift} />
    <Link a={56} b={48} />
    <Step ls={steps[2]} c={cs[2]} />
    <Link a={55} b={49} />
    <Step ls={steps[3]} c={cs[3]} />
    <Bar $w={27} $h={7} />
    <EndDot $w={17} $h={20} $b={5} />
  </Flow>
);
const Icon = ({ top, h, children }: { top: number; h: number; children: ReactNode }) => (
  <Chart v={[58, top, 298, top + h]}>
    <g fill="none" stroke="#545454" strokeWidth={8}>{children}</g>
  </Chart>
);
const Exec2Board = () => (
  <Board $w={1510} $bg="#1f2227">
    <Lane $h={257} $top={38}>
      <Icon top={74} h={219}>
        <path d="M67,108 H114 L155,293 M122,146 H269 L252,249 H146 M176,146 V249 M226,146 V249" />
        <ellipse cx={162} cy={297} rx={17} ry={17} /><ellipse cx={226} cy={297} rx={17} ry={17} />
      </Icon>
      <LaneName $pt={142}><Fit w={157} s={42} c="#4a4c4f">Front End</Fit></LaneName>
      <LaneFlow lift={14} cs={["#ffff00", green, "#ffff00"]} steps={[[["Fetch", 62], ["Catalog", 88]], [["Add to", 77], ["Cart", 49]], [["Checkout", 109], ["(Web)", 68]], [["Checkout", 109], ["(Mobile)", 95]]]} />
    </Lane>
    <Lane $h={233} $alt $top={14}>
      <Icon top={307} h={219}>
        <ellipse cx={176} cy={388} rx={46} ry={66} />
        <path d="M92,526 V515 Q92,504 103,496 L149,463 Q176,486 203,463 L249,496 Q260,504 260,515 V526" />
      </Icon>
      <LaneName $pt={133}><Fit w={142} s={42} c="#424548">Payment</Fit></LaneName>
      <LaneFlow steps={[[["Home", 70], ["Page", 55]], [["Account", 93]], [["Setup", 66], ["Payment", 102]], [["Payment", 102], ["Confirmed", 121]]]} />
    </Lane>
    <Lane $h={232} $top={14}>
      <Icon top={540} h={218}>
        <ellipse cx={165} cy={629} rx={43} ry={63} />
        <path d="M111,612 Q118,555 165,555 Q212,555 219,612" strokeWidth={6} />
        <path d="M116,612 Q98,616 98,633 Q98,650 116,654 Z M214,612 Q232,616 232,633 Q232,650 214,654 Z" strokeWidth={6} />
        <path d="M118,654 Q128,672 148,670" strokeWidth={6} />
        <rect x={148} y={666} width={14} height={6} />
        <path d="M87,760 V746 Q88,736 98,729 L138,700 Q165,718 192,700 L233,729 Q243,736 243,746 V760" />
      </Icon>
      <LaneName $pt={142}><Fit w={73} s={42} c="#4a4c4f">CRM</Fit></LaneName>
      <LaneFlow steps={[[["Main", 57], ["Page", 55]], [["Customer", 112], ["Search", 77]], [["Customer", 112], ["Details", 79]], [["Update", 85], ["Case", 54]]]} />
    </Lane>
    <Lane $h={232} $alt $top={15}>
      <Icon top={773} h={217}>
        <path d="M82,880 L245,824 Q256,822 252,833 L193,945 Q188,952 180,946 L82,893 Q76,886 82,880 Z" />
        <path d="M261,852 L282,950 L226,917 Z M83,912 L97,990 M84,916 L137,945 L117,990 M130,990 L150,958 L190,975 L214,933 L280,964 Q287,970 278,976 L222,990" />
      </Icon>
      <LaneName $pt={142}><Fit w={170} s={42} c="#424548">Fulfillment</Fit></LaneName>
      <LaneFlow steps={[[["Landing", 94]], [["Order", 68], ["Details", 79]], [["Update", 85]], [["Order", 68], ["Confirm", 92]]]} />
    </Lane>
    <Row $h={132} $pad="0 0 0 14px">
      <Chart v={[72, 1032, 128, 1120]}>
        <ellipse cx={100} cy={1083} rx={19} ry={26} fill="none" stroke="#8d8f91" strokeWidth={6} />
        <path d="M98,1044 V1056 M112,1062 L120,1054" stroke="#8d8f91" strokeWidth={8} fill="none" />
        <ellipse cx={98} cy={1045} rx={7} ry={6} fill="#8d8f91" />
        <path d="M99,1083 V1066 Q111,1068 111,1083 Q109,1096 98,1097 Z" fill="#8d8f91" />
        <path d="M76,1086 L92,1100 L78,1106 Z" fill="#8d8f91" />
      </Chart>
      <Gap $w={326} />
      <Fit w={136} s={97} l={132} c="#85878a" b={300} f="Lato, sans-serif">APP</Fit>
      <Gap $w={3} />
      <Fit w={424} s={97} l={132} c="#85878a" b={700} f="Lato, sans-serif">DYNAMICS</Fit>
      <Gap $w={36} />
      <Row $h={132} $pad="3px 0 0"><Fit w={436} s={96} c="#a8aaab">ECommerce</Fit></Row>
    </Row>
  </Board>
);

/* ---------- Dev - Sample 1 ---------- */
const Frame = styled.div`
  width: 1467px;
  height: 1074px;
  margin: 7px 0 0 6px;
  background: #ced2d8;
`;
const Holder = styled.div`
  display: flow-root;
`;
const devKeys: [number, number, string, string, number][] = [
  [330, 573, "#1f77b4", "/appdynamicspilot/* > Average Response Time (ms)", 336],
  [713, 573, "#ff7f1a", "/catalog.php > Average Response Time (ms)", 289],
  [1095, 573, "#2ca02c", "/items/all.GET > Average Response Time (ms)", 300],
  [330, 599, "#d62728", "/rest/items > Average Response Time (ms)", 279],
  [713, 599, "#9467bd", "CustomerQueue > Average Response Time (ms)", 315],
  [1095, 599, "#8c564b", "UserLogOut.memberLogOut > Average Response", 325],
  [330, 652, "#e377c2", "UserLogin.memberLogin > Average Response Time", 337],
  [713, 652, "#7f7f7f", "ViewCart.addToCart > Average Response Time (ms)", 339],
  [1095, 652, "#bcbd22", "ViewCart.sendItems > Average Response Time (ms)", 340],
];
const tx = [343, 356, 380, 404, 428, 451, 475, 499, 524, 547, 571, 595, 619, 643, 668];
const multi: [string, number[]][] = [
  ["#2ca02c", [944, 938, 929, 973, 930, 950, 929, 943, 950, 901, 916, 944, 922, 914, 937]],
  ["#d62728", [952, 951, 958, 953, 952, 954, 957, 959, 951, 955, 953, 957, 953, 951, 960]],
  ["#ff7f0e", [966, 968, 961, 956, 975, 958, 952, 972, 955, 971, 949, 961, 970, 954, 965]],
  ["#1f77b4", [968, 975, 982, 983, 978, 980, 971, 976, 961, 979, 972, 958, 974, 966, 972]],
  ["#9467bd", [985, 978, 968, 964, 982, 970, 975, 968, 984, 966, 974, 969, 981, 972, 964]],
  ["#8c564b", [968, 972, 1002, 951, 962, 983, 966, 976, 971, 944, 962, 975, 968, 958, 988]],
  ["#e377c2", [967, 961, 970, 966, 973, 962, 958, 973, 966, 972, 963, 968, 979, 980, 967]],
  ["#7f7f7f", [968, 974, 961, 979, 958, 972, 968, 986, 1001, 960, 974, 988, 964, 977, 985]],
  ["#bcbd22", [992, 985, 957, 986, 974, 969, 962, 984, 972, 963, 966, 961, 1001, 957, 970]],
  ["#17becf", [984, 973, 966, 972, 988, 968, 977, 989, 987, 955, 975, 970, 965, 952, 968]],
];
const SideKeys = ({ x, kind, ws }: { x: number; kind: string; ws: number[] }) => (
  <g>
    <Key x={x} y={895} c="#1f77b4" line w={ws[0]} gap={23}>/appdynamicspilot</Key>
    <T x={x + 23} y={922} w={ws[1]} c="#151515">{`> ${kind} per Minute`}</T>
    <Key x={x} y={949} c="#ff7f1a" line w={95} gap={23}>/catalog.php &gt;</Key>
    <T x={x + 23} y={975} w={ws[2]} c="#151515">{`${kind} per Minute`}</T>
    <svg x={x} y={988} width={160} height={17} viewBox={`${x} 988 160 17`}>
      <Key x={x} y={1001} c="#2ca02c" line w={105} gap={23}>/items/all GET &gt;</Key>
    </svg>
    <Pager x={x} y={1027} w={22}>1/5</Pager>
  </g>
);
const DevBoard = () => (
  <Board $bg="#fff">
    <Holder>
      <Frame>
        <Grid $cols="229px 1204px" $gap="13px" $pad="17px 0 0 11px">
          <Stack $gap={15}>
            <Panel $h={336}>
              <Row $h={76} $pad="0 0 0 15px"><Fit w={158} s={27}>BT Response Time</Fit></Row>
              <Row $h={238} $center><Disc $w={154} $h={222} /></Row>
            </Panel>
            <Panel $h={337}>
              <Row $h={78} $pad="0 0 0 15px"><Fit w={116} s={27}>BT Error Rate</Fit></Row>
              <Row $h={234} $center><Disc $w={154} $h={222} /></Row>
            </Panel>
          </Stack>
          <Panel $h={688}>
            <Row $h={76} $pad="0 0 0 16px"><Fit w={321} s={27}>Business Transaction Response Time</Fit></Row>
            <Chart v={[293, 136, 1497, 748]}>
              <Axis x1={350} x2={1480} lx={333} ys={[[160, "200", 25], [240, "150", 25], [320, "100", 25], [400, "50", 17], [479, "0", 8]]} base={479} ly={505} xs={pm([[390, 20], [541, 22], [692, 24], [843, 26], [993, 28], [1144, 30], [1295, 32], [1446, 34]], 52)} />
              <Area c="#ff7f0e" base={479} d="350,455 390,448 467,420 541,425 617,462 640,445 692,370 768,425 843,290 917,340 993,455 1010,445 1069,322 1144,424 1219,333 1295,425 1370,440" />
              <Area c={G} base={479} d="350,420 390,468 467,390 541,455 617,420 692,430 768,309 843,475 917,430 993,458 1069,449 1144,272 1219,440 1295,421 1370,295" />
              <Area c="#8c564b" o={0.35} base={479} d="350,450 390,450 617,458 768,455 993,450 1219,445 1295,425 1370,419" />
              <Area c="#bcbd22" base={479} d="350,434 390,428 467,438 541,422 617,427 692,427 768,435 843,425 917,440 993,432 1069,436 1144,435 1219,432 1295,448 1370,437" />
              <Area c="#17b9cf" base={479} d="350,360 390,262 467,376 541,390 617,452 692,238 768,452 843,287 917,334 993,405 1069,382 1144,455 1219,450 1295,451 1370,377" />
              <rect x={350} y={455} width={1020} height={24} fill="#3cb4a2" opacity={0.85} />
              {devKeys.map(([x, y, c, t, w]) => <Key key={t} x={x} y={y} c={c} w={w}>{t}</Key>)}
              <T x={1119} y={626} w={67} c="#151515">Time (ms)</T>
              <Pager x={329} y={682} w={22}>1/2</Pager>
            </Chart>
          </Panel>
        </Grid>
        <Grid $cols="229px 596px 596px" $rows="335px" $gap="12.5px" $pad="18px 0 0 11px">
          <Panel>
            <Stack $pad="22px 0 0 15px">
              <Fit w={188} s={27} l={27}>Application Response</Fit>
              <Fit w={86} s={27} l={27}>Time (ms)</Fit>
            </Stack>
            <Row $h={258} $center><Fit w={38} s={50}>25</Fit></Row>
          </Panel>
          <Panel>
            <Row $h={74} $pad="0 0 0 16px"><Fit w={267} s={27}>Business Transaction Call Load</Fit></Row>
            <Chart v={[293, 840, 889, 1101]}>
              <Axis x1={343} x2={703} lx={325} ys={[[865, "20", 17], [937, "10", 17]]} base={1007} ly={1033} xs={pm([[354, 20], [475, 25], [595, 30]], 51)} />
              {multi.map(([c, ys]) => <Curve key={c} c={c} w={3} d={ys.map((y, i) => `${tx[i]},${y}`).join(" ")} />)}
              <SideKeys x={736} kind="Calls" ws={[125, 121, 109]} />
            </Chart>
          </Panel>
          <Panel>
            <Row $h={74} $pad="0 0 0 16px"><Fit w={280} s={27}>Business Transaction Error Load</Fit></Row>
            <Chart v={[901, 840, 1492, 1101]}>
              <Axis x1={944} x2={1310} lx={925} ys={[[937, "0", 8]]} base={1007} ly={1033} xs={pm([[955, 20], [1077, 25], [1200, 30]], 52)} />
              <Line c="#db4545" w={5} d="944,936 1276,936" />
              <SideKeys x={1344} kind="Errors" ws={[125, 128, 117]} />
            </Chart>
          </Panel>
        </Grid>
      </Frame>
    </Holder>
  </Board>
);

/* ---------- BT - Sample 1 ---------- */
const indigo = "#2a1f9c";
const pulses = ([[875, 273], [899, 291], [926, 282], [953, 282], [982, 258], [1008, 294], [1034, 310], [1062, 276], [1090, 285], [1115, 288], [1142, 293], [1168, 291], [1197, 262], [1219, 267], [1248, 297], [1276, 270], [1301, 291], [1327, 294], [1355, 288], [1382, 294], [1408, 295], [1435, 291], [1463, 298]] as number[][])
  .map(([x, t]) => `${x - 9},421 ${x - 7},416 ${x - 4},${t + 18} ${x - 1},${t} ${x + 2},${t + 3} ${x + 5},416 ${x + 7},421`).join(" ");
const spikes: [number, number, number][] = [[856, 808, 903], [875, 822, 910], [894, 762, 896], [912, 755, 908], [930, 822, 870], [949, 795, 890], [967, 822, 903], [987, 802, 868], [1005, 840, 880], [1024, 802, 903], [1042, 802, 900], [1061, 802, 890], [1079, 822, 908], [1098, 781, 902], [1116, 790, 880], [1135, 781, 902], [1153, 802, 888], [1172, 755, 903], [1190, 755, 908], [1208, 769, 905], [1227, 788, 903], [1246, 788, 875], [1266, 788, 895]];
const StatValue = styled.div`
  display: flex;
  justify-content: flex-end;
  padding: 8px 26px 0 0;
`;
const Stat = ({ lines, value, vw = 0 }: { lines: Lbl[]; value?: string; vw?: number }) => (
  <Panel>
    <Stack $pad="18px 25px 0 19px">
      {lines.map(([t, w]) => <Fit key={t} w={w} s={22} l={21}>{t}</Fit>)}
    </Stack>
    {value && <StatValue><Fit w={vw} s={23}>{value}</Fit></StatValue>}
  </Panel>
);
const BtBoard = () => (
  <Board>
    <Stack $gap={14} $pad="8px 4px 0 6px">
      <Panel $h={108}>
        <Row $h={110} $pad="0 0 0 5px"><Fit w={596} s={39}>Business Transaction: Checkout</Fit></Row>
      </Panel>
      <Grid $cols="727px 727px" $rows="351px" $gap="13px">
        <Panel>
          <Row $h={56} $pad="0 0 0 19px"><Fit w={162} s={22}>Calls per Minute</Fit></Row>
          <Chart v={[43, 222, 770, 517]}>
            <Axis x1={90} x2={751} lx={71} s={18} ys={[[230, "8", 9], [327, "6", 9], [424, "4", 9]]} base={430} ly={451} xs={[[197, "12:00 PM", 69], [307, "4:00 PM", 60], [417, "8:00 PM", 60], [527, "3/23/16", 58], [637, "4:00 AM", 60], [734, "8:00 AM", 60]]} />
            <Line c={indigo} w={3} d="88,374 115,374 120,424 124,374 192,374 197,325 201,374 205,374 210,424 215,374 220,374 224,325 229,374 234,325 238,374 274,374 279,325 284,374 288,374 293,325 298,374 312,374 317,325 331,325 334,374 358,374 362,325 366,325 370,374 375,325 380,374 393,374 398,325 403,374 408,374 413,325 421,424 425,325 431,325 435,374 452,374 457,325 462,374 467,325 472,374 486,374 489,325 500,325 504,277 509,325 513,374 517,325 522,374 558,374 564,424 569,374 578,374 582,325 588,374 595,325 601,325 604,374 609,325 613,374 618,325 624,325 628,374 670,374 674,325 678,374 683,325 687,374 706,374 710,325 715,325 719,374 743,374" />
          </Chart>
        </Panel>
        <Panel>
          <Row $h={56} $pad="0 0 0 19px"><Fit w={162} s={22}>Calls per Minute</Fit></Row>
          <Chart v={[783, 222, 1510, 517]}>
            <Axis x1={849} x2={1491} lx={829} s={18} ys={[[230, "15k", 27], [295, "10k", 27], [359, "5k", 18], [424, "0k", 18]]} base={430} ly={451} xs={[[952, "12:00 PM", 69], [1113, "6:00 PM", 60], [1273, "3/23/16", 58], [1433, "6:00 AM", 60]]} />
            <Line c={indigo} w={3} d={`849,297 852,421 ${pulses} 1482,421`} />
          </Chart>
        </Panel>
      </Grid>
      <Grid $cols="233px 234px 232px 234px 233px" $rows="107px" $gap="13.4px">
        <Stat lines={[["Calls per Minute", 162]]} value="5" vw={13} />
        <Stat lines={[["Total Calls", 103]]} value="7,408" vw={54} />
        <div />
        <Stat lines={[["Average Response", 184], ["Time (ms)", 99]]} />
        <Stat lines={[["Max Response", 147], ["Time (ms)", 99]]} />
      </Grid>
      <Grid $cols="727px 727px" $rows="351px" $gap="13px">
        <Panel>
          <Row $h={56} $pad="0 0 0 19px"><Fit w={178} s={22}>Errors per Minute</Fit></Row>
          <Chart v={[43, 708, 770, 1003]}>
            <Axis x1={90} x2={751} lx={71} s={18} ys={[[716, "3", 9], [781, "2", 9], [846, "1", 9], [910, "0", 9]]} base={916} ly={938} xs={[[197, "12:00 PM", 69], [307, "4:00 PM", 60], [417, "8:00 PM", 60], [527, "3/23/16", 58], [637, "4:00 AM", 60], [734, "8:00 AM", 60]]} />
            <Line c="#ff1010" d="88,845 92,845 95,910 100,845 275,845 279,781 284,845 290,845 293,781 297,845 427,845 431,910 435,845 440,910 443,845 447,910 452,845 509,845 513,910 517,845 532,845 536,910 541,845 638,845 641,910 645,845 665,845 669,781 674,845 684,845 688,910 692,845 735,845 738,910 743,845" />
          </Chart>
        </Panel>
        <Panel>
          <Row $h={56} $pad="0 0 0 19px"><Fit w={257} s={22}>Slow, Very Slow and Stalls</Fit></Row>
          <Chart v={[783, 708, 1510, 1003]}>
            <Axis x1={840} x2={1285} lx={821} s={18} ys={[[716, "30", 18], [783, "20", 18], [849, "10", 18], [915, "0", 9]]} base={916} ly={938} xs={[[987, "4:00 PM", 60], [1135, "3/23/16", 58], [1284, "8:00 AM", 60]]} />
            <Line c="#fbb27c" w={2.4} d="840,820 839,885" />
            {spikes.map(([x, t, b]) => (
              <g key={x}>
                <Line c="#fb8d2c" w={2.5} d={`${x - 2},${Math.min(b + 8, 910)} ${x - 1},${t} ${x + 1},${t + 2} ${x + 3},${b}`} />
                <line x1={x + 3} x2={x + 4} y1={b - 14} y2={b - 4} stroke="#b9c426" strokeWidth={2.5} />
              </g>
            ))}
            <Key x={1324} y={740} c="#c8cf3a" line w={98} gap={28} s={18} b={600}>ECommerce-</Key>
            <T x={1352} y={761} w={76} s={18} b={600}>Services &gt;</T>
            <T x={1352} y={782} w={86} s={18} b={600}>Checkout &gt;</T>
            <T x={1352} y={804} w={125} s={18} b={600}>Number of Slow</T>
            <T x={1352} y={825} w={36} s={18} b={600}>Calls</T>
            <Key x={1324} y={847} c="#fb8d2c" line w={98} gap={28} s={18} b={600}>ECommerce-</Key>
            <T x={1352} y={868} w={76} s={18} b={600}>Services &gt;</T>
            <T x={1352} y={889} w={86} s={18} b={600}>Checkout &gt;</T>
            <svg x={1350} y={898} width={150} height={18} viewBox="1350 898 150 18">
              <T x={1352} y={910} w={124} s={18} b={600}>Number of Very</T>
            </svg>
            <Pager x={1325} y={933} w={25}>1/3</Pager>
          </Chart>
        </Panel>
      </Grid>
      <Grid $cols="233px 234px 232px 234px 233px 233px" $rows="130px" $gap="13.4px">
        <Stat lines={[["Errors per Minute", 178]]} value="1" vw={12} />
        <Stat lines={[["Total Errors", 118]]} value="1,152" vw={54} />
        <div />
        <Stat lines={[["Number of Slow", 162], ["Calls", 49]]} />
        <Stat lines={[["Number of Very", 161], ["Slow Calls", 100]]} />
        <Stat lines={[["Stall Count", 109]]} value="--" vw={14} />
      </Grid>
    </Stack>
  </Board>
);

const cards: [string, number, () => React.JSX.Element][] = [
  ["OPs - Java Sample 1", 229, EventsBoard],
  ["OPs - .NET Sample 1", 232, EventsBoard],
  ["OPs - Sample 2", 173, MetricsBoard],
  ["OPs - Sample 3", 173, NodesBoard],
  ["OPs - Sample 4", 173, AcmeBoard],
  ["Workflow Widgets", 202, WorkflowBoard],
  ["Exec Dashboard 1", 200, Exec1Board],
  ["Exec Dashboard 2", 203, Exec2Board],
  ["Dev - Sample 1", 168, DevBoard],
  ["BT - Sample 1", 156, BtBoard],
];

export default function App() {
  return (
    <Page>
      <Global />
      <Viewport>
        <Gallery>
          {cards.map(([title, w, Body]) => (
            <Card key={title}>
              <Thumb><Body /></Thumb>
              <Caption><Fit w={w} s={24} l={30} b={700} c="#337ab7">{title}</Fit></Caption>
            </Card>
          ))}
        </Gallery>
      </Viewport>
      <Rail>
        <RailPart $h={32} $c="#b2b2b2" />
        <RailPart $h={2} $c="#8a8a8a" />
        <RailPart $h={994} $c="#c3c3c3" />
        <RailPart $h={1} $c="#6a6a6a" />
        <RailPart $h={339} $c="#929292" />
      </Rail>
    </Page>
  );
}
